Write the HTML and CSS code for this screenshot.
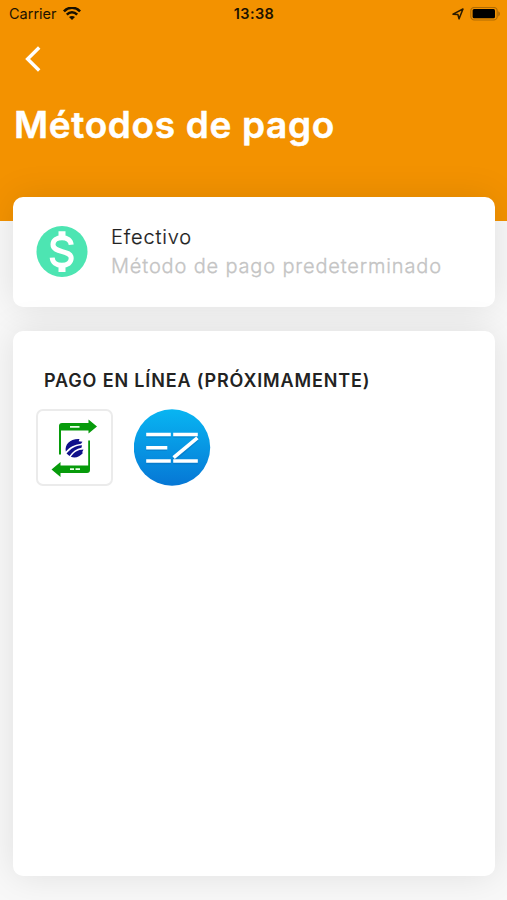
FILE: index.html
```
<!DOCTYPE html>
<html lang="es">
<head>
<meta charset="utf-8">
<title>Métodos de pago</title>
<link rel="stylesheet" href="styles.css">
</head>
<body>
<header class="header">
  <div class="status">
    <div class="status-left">
      <span class="carrier">Carrier</span>
      <svg class="wifi" width="18" height="14" viewBox="0 0 18 14" fill="none" stroke="#171000" stroke-width="2.6">
        <path d="M.9 4.400C5.500-.4 12.500-.4 17.100 4.400"/>
        <path d="M3.800 7.600C6.900 4.400 11.100 4.400 14.200 7.600"/>
        <path d="M9 12.900 6 10c1.800-1.500 4.200-1.500 6 0z" fill="#171000" stroke="none"/>
      </svg>
    </div>
    <time class="clock">13:38</time>
    <div class="status-right">
      <svg width="12" height="12" viewBox="0 0 12 12" fill="none" stroke="#2b1c00" stroke-width="1.500" stroke-linejoin="round"><path d="M1 6.200 11 1 7 10.900 5.900 6.500z"/></svg>
      <svg width="31" height="14" viewBox="0 0 31 14"><rect x=".8" y=".4" width="26.400" height="12.600" rx="3.600" fill="none" stroke="#b06c05" stroke-width="1.200"/><rect x="2.600" y="2" width="22.400" height="9.200" rx="1.500" fill="#000"/><path d="M28.200 4.200c2.400 1 2.400 4.200 0 5.200z" fill="#b06c05"/></svg>
    </div>
  </div>
  <a class="back" aria-label="Volver"><svg width="16" height="26" viewBox="0 0 16 26" fill="none" stroke="#fff" stroke-width="3.400"><path d="M14.200 1.500 2.600 13l11.600 11.500"/></svg></a>
  <h1 class="title">Métodos de pago</h1>
</header>
<main class="content">
  <section class="card method">
    <svg class="cash" width="52" height="52" viewBox="0 0 52 52"><circle cx="26" cy="25.500" r="25.500" fill="#4de5b2"/><path d="M35.200 18.800C34.800 14.300 31.300 11.700 26 11.700c-5.200 0-9 2.700-9 6.900 0 9.200 18.200 4.800 18.200 13.500 0 4.500-3.900 7.200-9.200 7.200-5.700 0-9.500-2.800-9.800-7.600" fill="none" stroke="#fff" stroke-width="5"/><path d="M22.500 5.200h7v6.500h-7zM22.500 39h7v6.900h-7z" fill="#fff"/></svg>
    <div class="method-text">
      <div class="method-name">Efectivo</div>
      <div class="method-note">Método de pago predeterminado</div>
    </div>
  </section>
  <section class="card online">
    <h2 class="online-title">PAGO EN LÍNEA (PRÓXIMAMENTE)</h2>
    <div class="logos">
      <div class="logo-box">
        <svg width="72" height="72" viewBox="0 0 72 72">
          <g fill="#079b0b">
            <path d="M20 42.500V14q0-3 3-3H49.500V7.500l8.500 7-8.500 7v-3H22v24z"/>
            <path d="M51 28.500V58q0 3-3 3H21.500v4L12.500 57.500l9-7.500v3.500H49.200V28.500z"/>
          </g>
          <path d="M31 14.800h9.500M31 57.200h4m1.500 0h4.500" stroke="#e9ffe9" stroke-width="1.800"/>
          <g fill="#10108a">
            <path d="M26.800 39.500C25.500 32.500 31 26.500 40.500 27l-.8 2.300 3.800.5-1.500 1.900C35 32.500 31 35 26.800 39.500z"/>
            <path d="M27.500 41.500C32 36.500 36 33.600 43 33.200l-.5 2.500C37.500 36.700 33.500 39.500 30.500 44z"/>
            <path d="M31.800 44.800C35 40.300 38.500 37.600 44.500 37.500l-1.500 3 1.200.2C40.500 45 36.500 46.300 31.800 44.800z"/>
          </g>
        </svg>
      </div>
      <svg class="ez" width="77" height="77" viewBox="0 0 77 77">
        <defs><linearGradient id="sky" x1="0" y1="0" x2="0" y2="1"><stop offset="0" stop-color="#08b5f2"/><stop offset="1" stop-color="#0677d5"/></linearGradient></defs>
        <circle cx="38" cy="38.500" r="38.200" fill="url(#sky)"/>
        <g fill="none" stroke-linecap="square" stroke-linejoin="round" stroke-width="3.600">
          <path d="M14 27h21M14 40.200h17M14 53.500h21M41 27h21M41 53.500h21M41 50 62 31.500" stroke="#075ca5" opacity=".3"/>
          <path d="M14 25.500h21M14 38.800h17.500M14 52h21M41 25.500h21M41 52h21M41 47.500 62 30" stroke="#fff"/>
        </g>
      </svg>
    </div>
  </section>
</main>
</body>
</html>
```

FILE: styles.css
```
* { box-sizing: border-box; }
body { margin: 0; height: 900px; overflow: hidden; background: #f8f8f8; font-family: Inter, sans-serif; color: #222; }
svg { display: block; flex: none; }
.header { height: 221px; background: #f39200; }
.status { height: 27px; padding: 0 6px 0 9px; display: grid; grid-template-columns: 1fr auto 1fr; align-items: center; color: #1d1300; }
.status-left, .status-right { display: flex; align-items: center; }
.status-left { gap: 6px; }
.status-right { justify-content: flex-end; gap: 6px; }
.carrier { font-size: 14.5px; line-height: 20px; }
.clock { margin-right: 2px; font-size: 14.5px; font-weight: 600; line-height: 20px; letter-spacing: .4px; }
.back { display: block; margin: 19px 0 0 25px; width: 16px; }
.title { margin: 30px 0 0 14px; font-size: 37px; line-height: 46px; font-weight: 600; letter-spacing: .65px; color: #fff; white-space: nowrap; -webkit-text-stroke: .5px #fff; }
.content { margin-top: -24.5px; padding: 0 12.5px 0 13px; display: flex; flex-direction: column; gap: 24.5px; }
.card { background: #fff; border-radius: 10px; box-shadow: 0 0 36px rgba(0, 0, 0, .1); }
.method { height: 110px; padding: 0 23px; display: flex; align-items: center; gap: 23px; }
.method-text { font-size: 20px; line-height: 29px; letter-spacing: .84px; white-space: nowrap; }
.method-name { font-weight: 300; -webkit-text-stroke: .2px #222; }
.method-note { font-weight: 300; color: #c4c4c4; -webkit-text-stroke: .3px #c4c4c4; }
.online { height: 545px; padding: 38px 23px; }
.online-title { margin: 0 0 0 8px; font-size: 18px; line-height: 24px; font-weight: 600; letter-spacing: .85px; white-space: nowrap; }
.logos { margin-top: 16px; display: flex; gap: 21px; }
.logo-box { width: 77px; height: 77px; border: 2.5px solid #ebebeb; border-radius: 7px; display: flex; align-items: center; justify-content: center; }
```
